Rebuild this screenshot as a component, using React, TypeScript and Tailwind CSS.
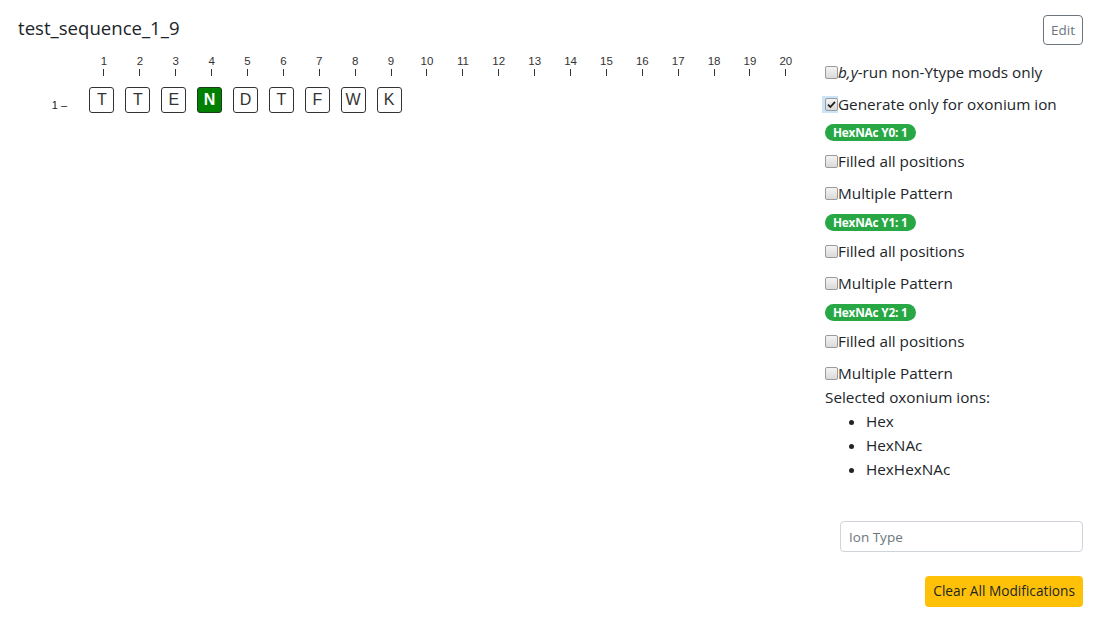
import React from "react"

const sequence = ["T", "T", "E", "N", "D", "T", "F", "W", "K"]
const glycoIndex = 3
const ruler = Array.from({ length: 20 }, (_, i) => i + 1)

const body = { fontFamily: '"Open Sans", "Noto Sans", sans-serif' }
const arial = { fontFamily: '"Liberation Sans", Arial, sans-serif' }

function Check({ checked = false }: { checked?: boolean }) {
  const box = (
    <span className="inline-flex w-[13px] h-[13px] items-center justify-center rounded-[2px] border border-[#9a9a9a] bg-gradient-to-b from-[#f4f4f4] to-[#dadada]">
      {checked && (
        <svg width="9" height="9" viewBox="0 0 9 9">
          <path d="M1 4.6 L3.4 7 L8 1.8" fill="none" stroke="#222" strokeWidth="1.8" />
        </svg>
      )}
    </span>
  )
  if (checked) {
    return <span className="inline-flex w-[16px] h-[17px] -ml-[3px] items-center justify-end bg-[#cce4f7]">{box}</span>
  }
  return box
}

function CheckRow({ label, checked, className = "" }: { label: React.ReactNode; checked?: boolean; className?: string }) {
  return (
    <div className={`flex items-center h-6 ${className}`}>
      <Check checked={checked} />
      <span className="text-[15.3px] leading-6 text-[#212529]">{label}</span>
    </div>
  )
}

function Badge({ text }: { text: string }) {
  return (
    <div className="flex mb-2">
      <span className="inline-flex items-center h-[17px] px-[8px] rounded-full bg-[#28a745] text-white text-[11.8px] font-bold leading-none tracking-[-0.2px]">
        {text}
      </span>
    </div>
  )
}

function YGroup({ level, last }: { level: number; last?: boolean }) {
  return (
    <>
      <Badge text={`HexNAc Y${level}: 1`} />
      <CheckRow label="Filled all positions" className="mb-2" />
      <CheckRow label="Multiple Pattern" className={last ? "" : "mb-[9px]"} />
    </>
  )
}

export default function App() {
  return (
    <div className="min-h-screen bg-white pl-[18px] pr-5 pt-[15px] text-[#212529]" style={body}>
      {/* Header */}
      <div className="flex items-center justify-between h-[30px]">
        <h5 className="text-[18.6px] font-medium leading-none text-[#212529] -mt-[3px]">test_sequence_1_9</h5>
        <button className="h-[30px] w-[40px] rounded border border-[#6c757d] text-[13.5px] text-[#6c757d] bg-white">
          Edit
        </button>
      </div>

      <div className="flex mt-[15px]">
        {/* Sequence viewer */}
        <div className="flex-1" style={arial}>
          <div className="flex pl-[68px] -mt-[6px]">
            {ruler.map((n) => (
              <div key={n} className="w-[35.9px] flex flex-col items-center">
                <span className="text-[11.5px] leading-[14px] text-[#333]">{n}</span>
                <span className="w-px h-[7px] bg-[#333] mt-[1px]" />
              </div>
            ))}
          </div>
          <div className="flex items-center mt-[11px]">
            <div className="w-[66px] flex justify-end pr-[17px] pt-[10px] text-[11px] text-[#222]">1 –</div>
            {sequence.map((aa, i) => (
              <div key={i} className="w-[35.9px] flex justify-center">
                {i === glycoIndex ? (
                  <span className="w-[25px] h-[26px] flex items-center justify-center rounded-[3px] border border-[#1a3d1a] bg-[#008000] text-white text-[16px] font-bold">
                    {aa}
                  </span>
                ) : (
                  <span className="w-[25px] h-[26px] flex items-center justify-center rounded-[3px] border border-[#333] bg-white text-[#333] text-[16px]">
                    {aa}
                  </span>
                )}
              </div>
            ))}
          </div>
        </div>

        {/* Options */}
        <div className="w-[258px] flex flex-col">
          <CheckRow
            className="mb-2"
            label={
              <>
                <i>b,y</i>-run non-Ytype mods only
              </>
            }
          />
          <CheckRow checked className="mb-2" label="Generate only for oxonium ion" />
          <YGroup level={0} />
          <YGroup level={1} />
          <YGroup level={2} last />
          <div className="text-[15.3px] leading-6">Selected oxonium ions:</div>
          <ul className="list-disc pl-[41px] text-[15.3px] leading-6">
            <li>Hex</li>
            <li>HexNAc</li>
            <li>HexHexNAc</li>
          </ul>

          <div className="pl-[15px] mt-10">
            <input
              placeholder="Ion Type"
              className="w-full h-[31px] rounded border border-[#ced4da] px-2 text-[13.5px] placeholder:text-[#6c757d] outline-none"
            />
          </div>
          <div className="flex justify-end mt-[24px]">
            <button className="h-[31px] px-[8px] rounded bg-[#ffc107] text-[13.7px] text-[#212529]">
              Clear All Modifications
            </button>
          </div>
        </div>
      </div>
    </div>
  )
}
